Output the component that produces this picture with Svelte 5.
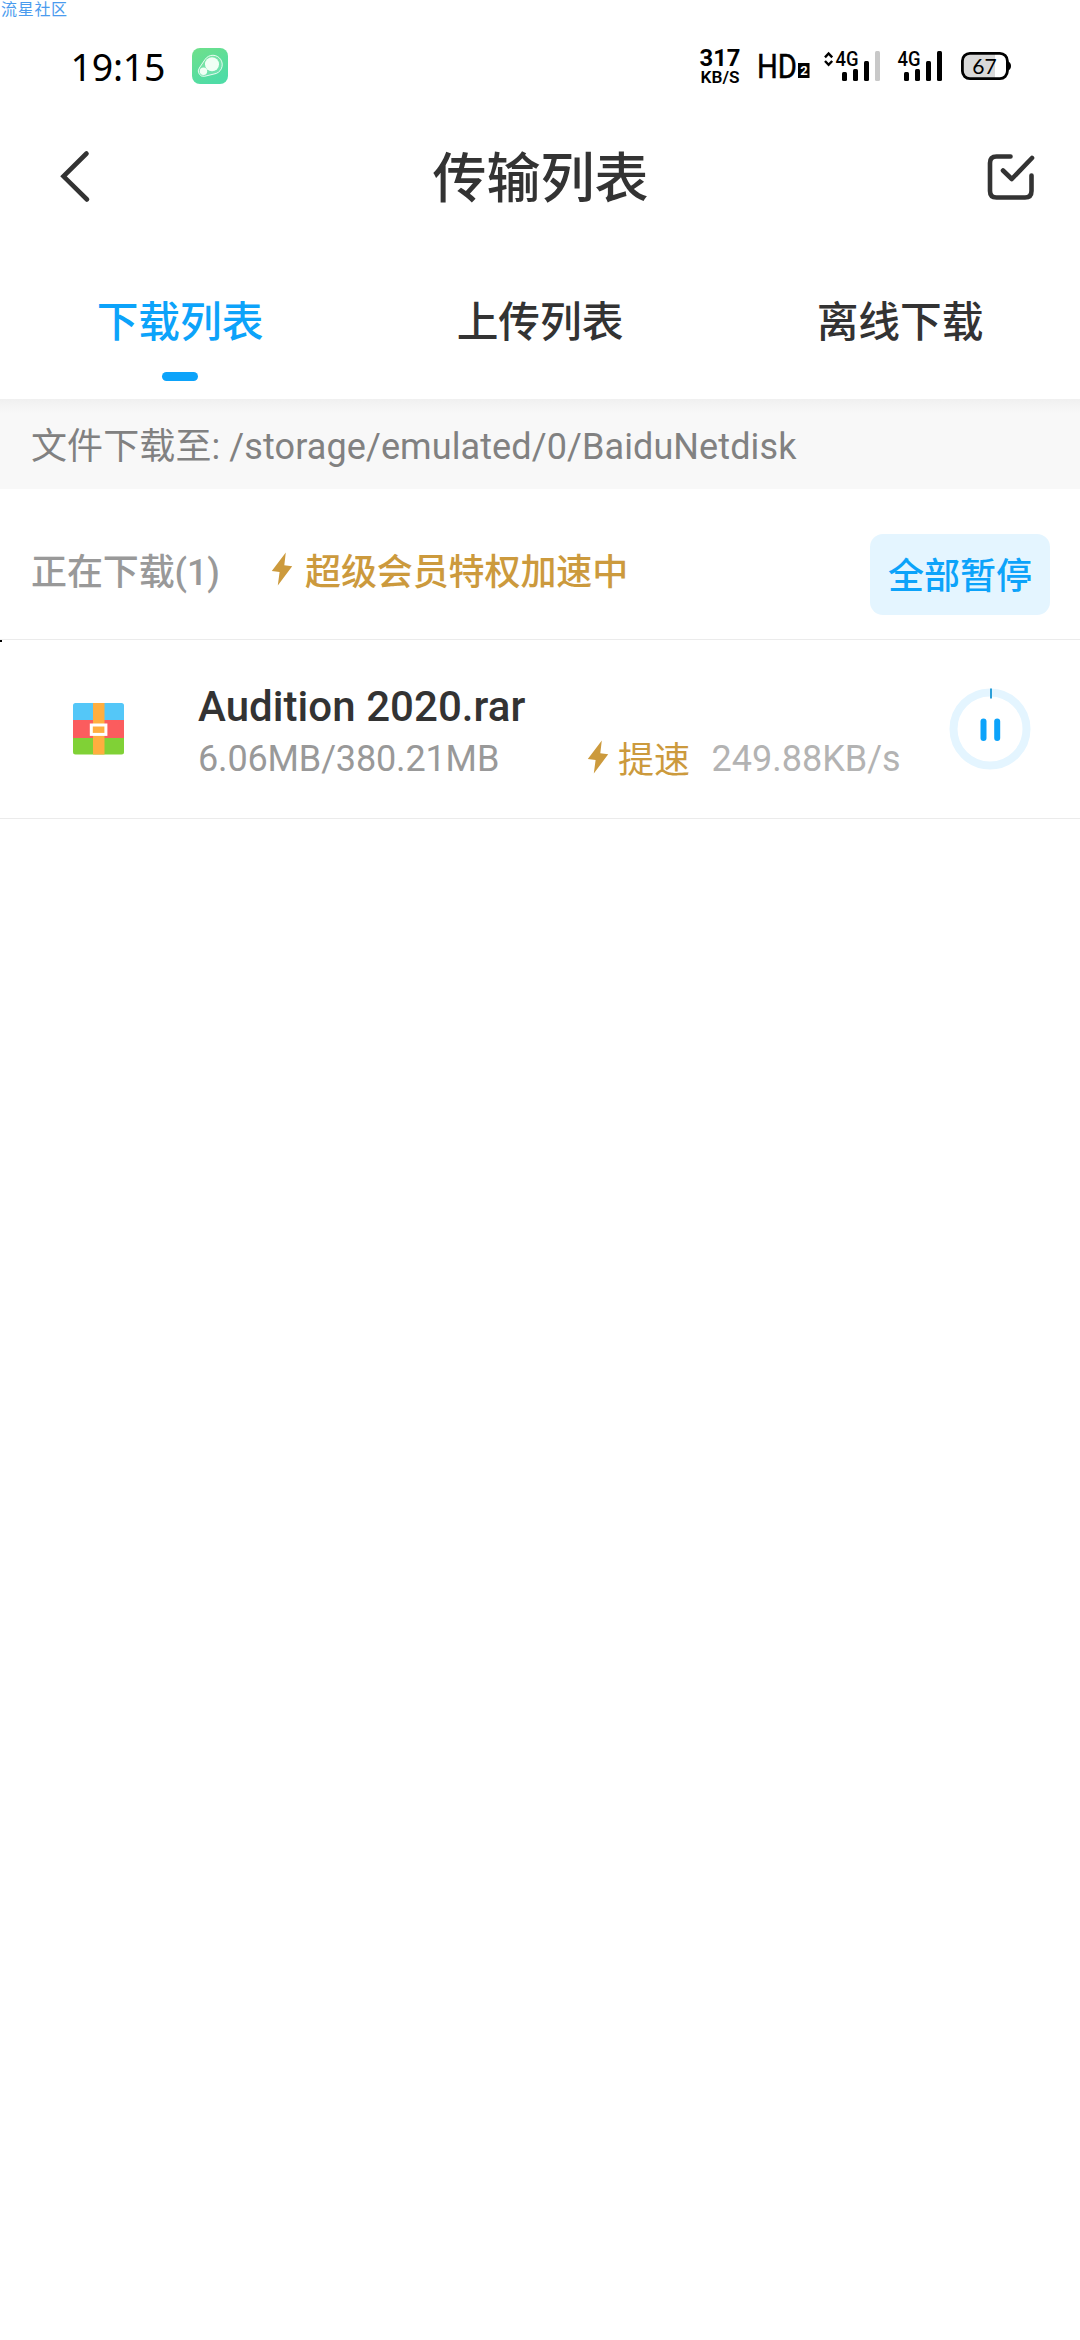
<script>
  const tabs = [
    { label: '下载列表', active: true },
    { label: '上传列表', active: false },
    { label: '离线下载', active: false }
  ];
</script>

{#snippet bolt()}
  <svg class="bolt" width="22" height="34" viewBox="0 0 22 34" aria-hidden="true">
    <path d="M14.8 0.5 L0.8 19 L8.6 20 L6.8 33.5 L21.2 14.3 L13.3 13.2 Z" fill="#cc9a3d" />
  </svg>
{/snippet}

<main class="screen">
  <div class="watermark">流星社区</div>

  <header class="status">
    <svg class="clock" width="94" height="36" viewBox="72 50 94 36">
      <text x="70.5" y="81" font-size="37.5" textLength="95" lengthAdjust="spacing">19:15</text>
    </svg>
    <svg class="app" width="36" height="36" viewBox="0 0 36 36" aria-hidden="true">
      <defs>
        <linearGradient id="mint" x1="0" y1="0" x2="0.5" y2="1">
          <stop offset="0" stop-color="#6fe08a" />
          <stop offset="1" stop-color="#4fdca6" />
        </linearGradient>
      </defs>
      <rect width="36" height="36" rx="8" fill="url(#mint)" />
      <path d="M13 11.5 L7.3 20 A5.3 5.3 0 0 0 12.5 28.3 L22 26 A9.4 9.4 0 1 0 13 11.5 Z" fill="#fff" fill-opacity=".15" stroke="#fff" stroke-opacity=".85" stroke-width="1" />
      <circle cx="20" cy="16.3" r="7" fill="#f0fff5" />
      <circle cx="11.5" cy="23.3" r="3.7" fill="#f0fff5" />
    </svg>

    <div class="indicators">
      <svg width="42" height="40" viewBox="699 47 42 40">
        <text class="rb" x="699.5" y="66.3" font-size="23" textLength="41" lengthAdjust="spacingAndGlyphs">317</text>
        <text class="rb kbs" x="700.5" y="83.2" font-size="17" textLength="39" lengthAdjust="spacingAndGlyphs">KB/S</text>
      </svg>
      <svg class="hd" width="53" height="40" viewBox="758 47 53 40">
        <text class="rr" x="757" y="78" font-size="33.5" textLength="40" lengthAdjust="spacingAndGlyphs" stroke="#000" stroke-width=".5">HD</text>
        <rect x="798" y="63" width="11.5" height="15" />
        <text class="two" x="800.2" y="75.3" font-size="13">2</text>
      </svg>
      <svg class="sim1" width="58" height="40" viewBox="823 47 58 40">
        <path d="M825 57.3 L828.6 53.5 L832.2 57.3 M825 61 L828.6 64.8 L832.2 61" fill="none" stroke="#000" stroke-width="2.4" />
        <text class="rr four" x="835.5" y="65.7" font-size="19.5" textLength="23" lengthAdjust="spacingAndGlyphs">4G</text>
        <rect x="842" y="72" width="5" height="9" rx="1.5" />
        <rect x="853" y="69" width="5" height="12" rx="1.5" />
        <rect x="864" y="61" width="5" height="20" rx="1.5" />
        <rect x="875" y="51" width="5" height="30" rx="1.5" fill="#c8c8c8" />
      </svg>
      <svg class="sim2" width="46" height="40" viewBox="897 47 46 40">
        <text class="rr four" x="897.5" y="65.7" font-size="19.5" textLength="23" lengthAdjust="spacingAndGlyphs">4G</text>
        <rect x="904" y="72" width="5" height="9" rx="1.5" />
        <rect x="915" y="69" width="5" height="12" rx="1.5" />
        <rect x="926" y="61" width="5" height="20" rx="1.5" />
        <rect x="937" y="51" width="5" height="30" rx="1.5" />
      </svg>
      <svg class="battery" width="52" height="40" viewBox="960 47 52 40">
        <path d="M995 53.5 H970 Q962.5 53.5 962.5 61 V71 Q962.5 78.5 970 78.5 H995 Z" fill="#d9d9d9" />
        <rect x="962.4" y="53.4" width="45" height="25.2" rx="7.5" fill="none" stroke="#000" stroke-width="2.8" />
        <path d="M1007 61 Q1011 62 1011 66 Q1011 70 1007 71 Z" />
        <text class="thin" x="972.2" y="74" font-size="21.5" textLength="24.5" lengthAdjust="spacingAndGlyphs">67</text>
      </svg>
    </div>
  </header>

  <nav class="titlebar">
    <svg width="32" height="56" viewBox="58 149 32 56" aria-label="返回">
      <path d="M86.5 153.5 L63.5 176.3 L87 199.5" fill="none" stroke="#333" stroke-width="4.6" stroke-linecap="round" />
    </svg>
    <h1>传输列表</h1>
    <svg width="50" height="50" viewBox="985.5 151.5 50 50" aria-label="选择">
      <path d="M1010 156 H996 Q989.5 156 989.5 162.5 V190.5 Q989.5 197 996 197 H1024.5 Q1031 197 1031 190.5 V175" fill="none" stroke="#333" stroke-width="4.6" stroke-linecap="round" />
      <path d="M1002.5 170 L1011.3 178.5 L1031.5 157.5" fill="none" stroke="#333" stroke-width="4.6" stroke-linecap="round" stroke-linejoin="round" />
    </svg>
  </nav>

  <div class="tabs">
    {#each tabs as tab}
      <div class="tab" class:active={tab.active}>
        <span>{tab.label}</span>
        <i></i>
      </div>
    {/each}
  </div>

  <div class="path"><span>文件下载至: /storage/emulated/0/BaiduNetdisk</span></div>

  <section class="group">
    <span class="count">正在下载(1)</span>
    <span class="badge">{@render bolt()}</span>
    <span class="vip">超级会员特权加速中</span>
    <button>全部暂停</button>
  </section>

  <article class="item">
    <svg class="archive" width="51" height="52" viewBox="0 0 51 52" aria-hidden="true">
      <clipPath id="box"><rect width="51" height="51.5" rx="2.5" /></clipPath>
      <g clip-path="url(#box)">
        <rect width="51" height="17" fill="#54c7f8" />
        <rect y="17" width="51" height="18" fill="#fb5c5e" />
        <rect y="35" width="51" height="17" fill="#80d136" />
        <rect x="20" width="11.5" height="52" fill="#ffae3f" />
      </g>
      <rect x="18.3" y="22" width="14.6" height="9.4" fill="#ffae3f" stroke="#fff" stroke-width="3" />
    </svg>
    <div class="info">
      <h2>Audition 2020.rar</h2>
      <div class="meta">
        <span class="size">6.06MB/380.21MB</span>
        {@render bolt()}
        <span class="boost">提速</span>
        <span class="speed">249.88KB/s</span>
      </div>
    </div>
    <svg class="ring" width="82" height="82" viewBox="0 0 82 82" aria-label="暂停">
      <circle cx="41" cy="41" r="36.5" fill="none" stroke="#e4f5ff" stroke-width="8" />
      <rect x="41" y="0.5" width="2" height="10" fill="#2d9fd8" />
      <rect x="31.5" y="30.5" width="6" height="22.5" rx="3" fill="#0ca3fa" />
      <rect x="45.2" y="30.5" width="6" height="22.5" rx="3" fill="#0ca3fa" />
    </svg>
  </article>
  <div class="speck"></div>
</main>

<style>
  :global(body) { background: #fff; }
  .screen {
    position: relative;
    width: 1080px;
    height: 2340px;
    overflow: hidden;
    background: #fff;
    color: #333;
    font-family: Roboto, "Noto Sans CJK SC", sans-serif;
  }
  .screen * { box-sizing: border-box; }
  svg { display: block; flex: none; overflow: visible; }
  span, h1, h2, button { white-space: nowrap; }
  .watermark {
    position: absolute;
    left: 1px;
    top: -1px;
    font: 400 16px/18px "Noto Sans CJK SC", sans-serif;
    letter-spacing: 0.7px;
    color: #4a9bee;
  }
  .status {
    display: flex;
    align-items: center;
    height: 132px;
    padding: 0 68px 0 72px;
  }
  .clock { font-family: "Noto Sans", sans-serif; margin-top: 4px; }
  .app { margin-left: 26px; }
  .indicators { display: flex; margin-left: auto; margin-top: 2px; }
  .hd { margin-left: 17px; }
  .sim1 { margin-left: 12px; }
  .sim2 { margin-left: 16px; }
  .battery { margin-left: 17px; }
  .rb { font-family: Roboto, sans-serif; font-weight: 700; }
  .kbs { font-weight: 600; }
  .rr { font-family: Roboto, sans-serif; font-weight: 400; }
  .four { font-weight: 500; }
  .two { font-family: Roboto, sans-serif; font-weight: 700; fill: #fff; }
  .thin { font-family: Lato, sans-serif; font-weight: 400; }
  .titlebar {
    display: flex;
    align-items: center;
    justify-content: space-between;
    height: 90px;
    padding: 0 44px 0 58px;
  }
  h1 {
    margin: 6px 0 0 5px;
    font-size: 54px;
    line-height: 80px;
    font-weight: 500;
  }
  .tabs { display: flex; height: 177px; }
  .tab {
    flex: 1;
    display: flex;
    flex-direction: column;
    align-items: center;
    padding-top: 71px;
    font-size: 41.7px;
    line-height: 60px;
    font-weight: 500;
  }
  .tab i { width: 36px; height: 9px; margin-top: 19px; border-radius: 4.5px; }
  .active { color: #0ca3fa; }
  .active i { background: #0ca3fa; }
  .path {
    display: flex;
    align-items: center;
    height: 90px;
    padding: 0 0 3px 31px;
    font-size: 36px;
    letter-spacing: 0.1px;
    color: #818181;
    background: linear-gradient(#f0f0f0, #f8f8f8 14px);
  }
  .group {
    display: flex;
    align-items: center;
    height: 151px;
    padding: 0 30px 0 31px;
    border-bottom: 1px solid #ebebeb;
    font-size: 36px;
    font-weight: 500;
  }
  .count { color: #999; width: 240px; margin-top: 10px; letter-spacing: -0.1px; }
  .badge { margin-top: 10px; }
  .vip { margin: 10px 0 0 12px; color: #cc9a3d; letter-spacing: -0.1px; }
  button {
    width: 180px;
    height: 81px;
    margin: 20px 0 0 auto;
    padding: 0 0 2px;
    border: 0;
    border-radius: 13px;
    background: #e4f5ff;
    color: #0ca3fa;
    font: inherit;
  }
  .item {
    display: flex;
    align-items: center;
    height: 179px;
    padding: 0 49px 0 73px;
    border-bottom: 1px solid #ebebeb;
  }
  .info { width: 750px; margin-left: 74px; padding-top: 1px; }
  h2 { margin: 0; font-size: 42px; line-height: 54px; font-weight: 500; letter-spacing: 0.05px; }
  .meta { display: flex; align-items: center; height: 46px; font-size: 36px; }
  .size { width: 389px; margin-top: 5px; color: #999; letter-spacing: -0.15px; }
  .boost { margin-left: 9px; color: #cc9a3d; }
  .speed { margin: 5px 0 0 21.5px; color: #b3b3b3; }
  .ring { margin-left: auto; }
  .speck { position: absolute; left: 0; top: 640px; width: 2px; height: 2px; background: #000; }
</style>
